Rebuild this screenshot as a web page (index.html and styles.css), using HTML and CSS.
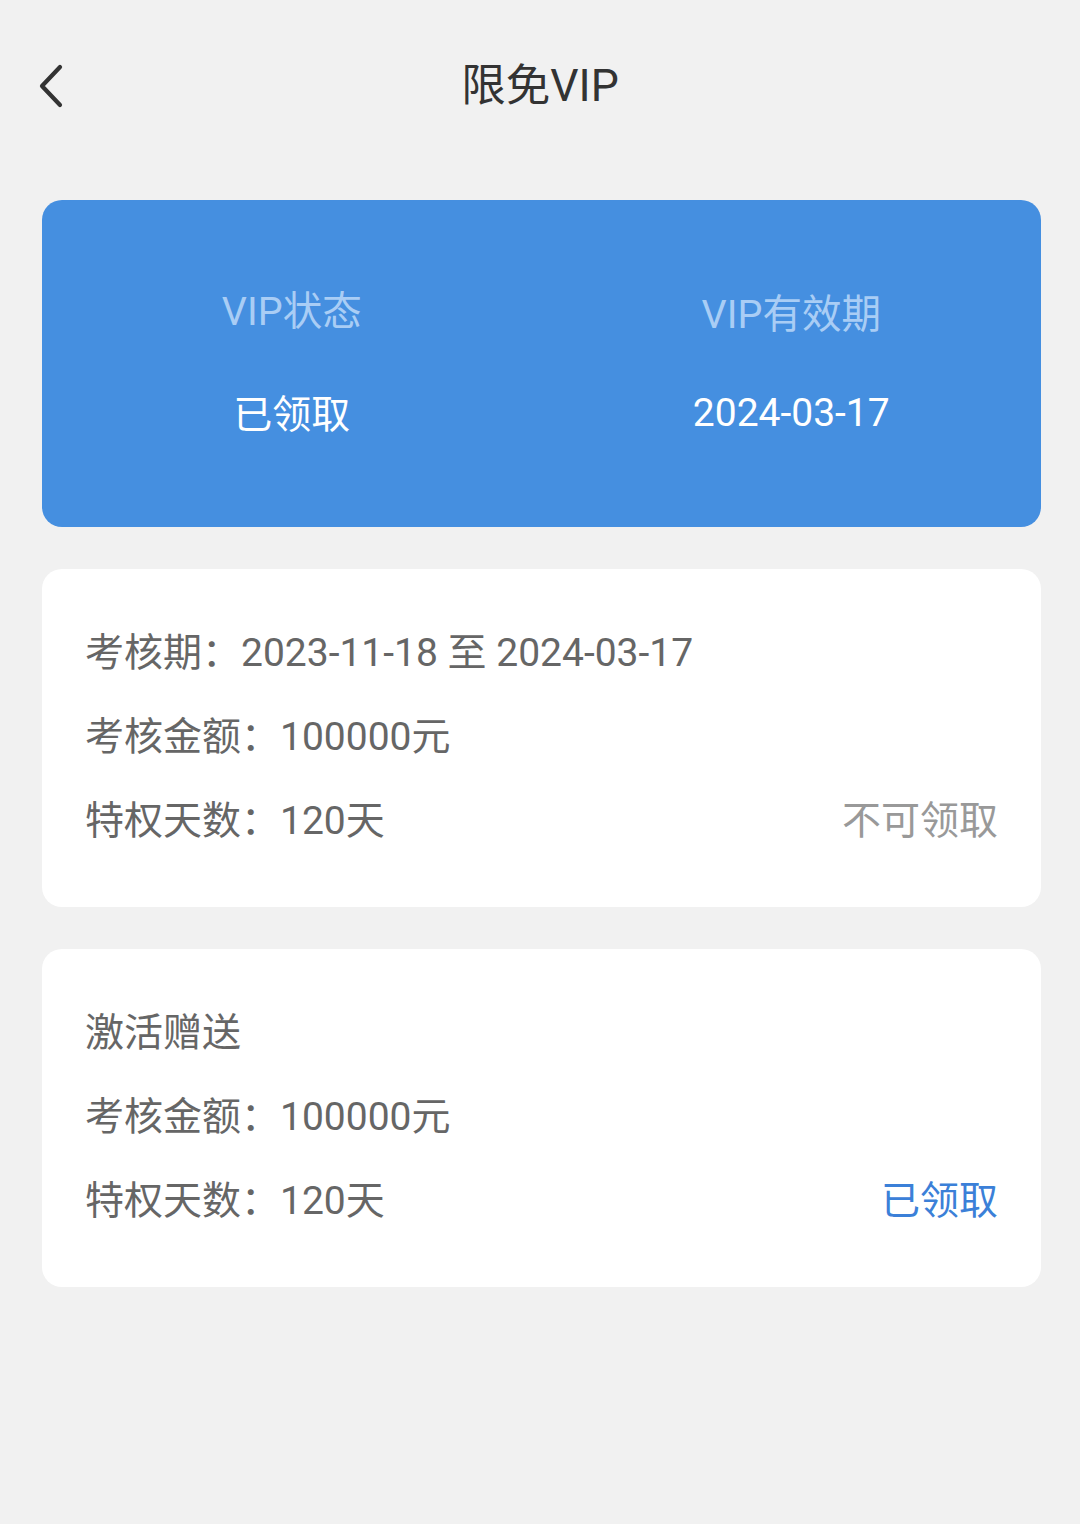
FILE: index.html
```html
<!DOCTYPE html>
<html lang="zh-CN">
<head>
<meta charset="utf-8">
<title>限免VIP</title>
<link rel="stylesheet" href="styles.css">
</head>
<body>
<header class="topbar">
  <span class="back" aria-label="返回">
    <svg width="32" height="44" viewBox="0 0 32 44"><polyline points="22,3 4,22 22,41" fill="none" stroke="#333" stroke-width="4.2" stroke-linecap="round" stroke-linejoin="round"/></svg>
  </span>
  <h1 class="title">限免VIP</h1>
</header>
<main class="content">
  <section class="vip-card">
    <div class="vip-col">
      <div class="vip-label">VIP状态</div>
      <div class="vip-value">已领取</div>
    </div>
    <div class="vip-col">
      <div class="vip-label">VIP有效期</div>
      <div class="vip-value date">2024-03-17</div>
    </div>
  </section>
  <section class="info-card">
    <div class="row">考核期：2023-11-18 至 2024-03-17</div>
    <div class="row">考核金额：100000元</div>
    <div class="row split"><span>特权天数：120天</span><span class="status disabled">不可领取</span></div>
  </section>
  <section class="info-card">
    <div class="row">激活赠送</div>
    <div class="row">考核金额：100000元</div>
    <div class="row split"><span>特权天数：120天</span><span class="status done">已领取</span></div>
  </section>
</main>
</body>
</html>
```
FILE: styles.css
```css
* { box-sizing: border-box; }
html, body { margin: 0; padding: 0; }
body {
  background: #f1f1f1;
  font-family: Roboto, "Noto Sans CJK SC", sans-serif;
  width: 1080px;
  min-height: 1524px;
}
.topbar {
  position: relative;
  height: 172px;
  display: flex;
  align-items: center;
  justify-content: center;
}
.back {
  position: absolute;
  left: 38px;
  top: 64px;
  width: 32px;
  height: 44px;
  display: block;
}
.back svg { display: block; }
.title {
  margin: 0;
  font-size: 44.5px;
  font-weight: 400;
  color: #333;
  line-height: 1;
}
.content {
  padding: 28px 39px 0 42px;
  display: flex;
  flex-direction: column;
  gap: 42px;
}
.vip-card {
  background: #458fe0;
  border-radius: 20px;
  height: 327px;
  display: grid;
  grid-template-columns: 1fr 1fr;
  align-items: center;
}
.vip-col {
  display: flex;
  flex-direction: column;
  align-items: center;
}
.vip-label {
  font-size: 39.5px;
  line-height: 46px;
  color: #a9cdf5;
  margin-top: 0;
}
.vip-value {
  font-size: 39px;
  line-height: 46px;
  color: #fff;
  margin-top: 57px;
}
.vip-value.date { margin-top: 52px; }
.info-card {
  background: #fff;
  border-radius: 20px;
  padding: 42px 43px 42px 43px;
  height: 338px;
}
.row {
  font-size: 39px;
  line-height: 84px;
  height: 84px;
  color: #666;
  white-space: nowrap;
}
.row.split {
  display: flex;
  justify-content: space-between;
}
.status.disabled { color: #999; }
.status.done { color: #3b80d8; }
```
